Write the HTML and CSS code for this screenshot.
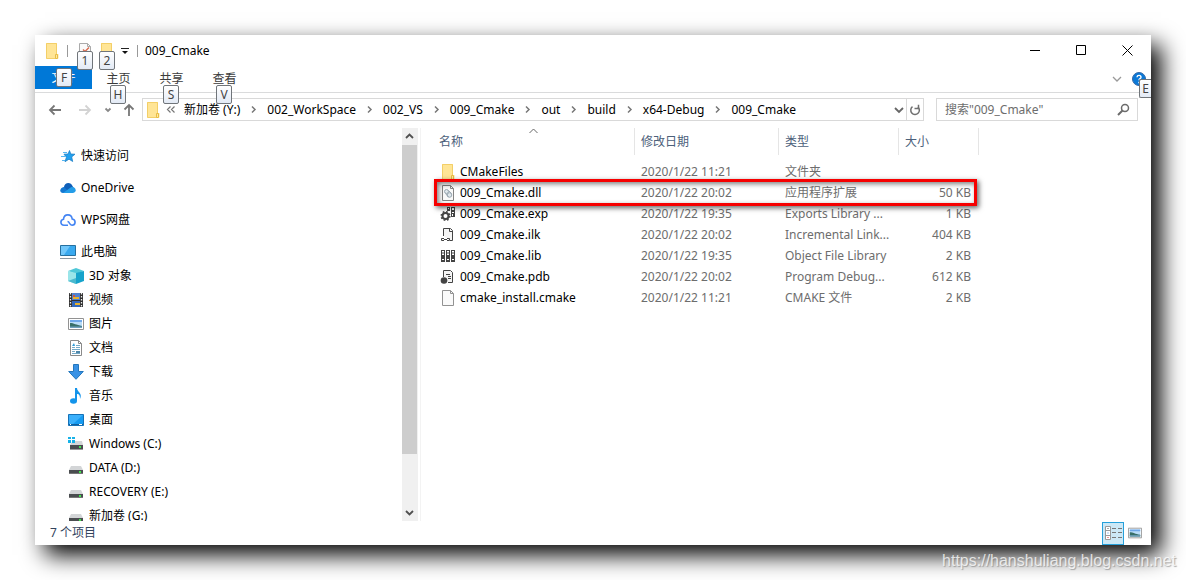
FILE: index.html
```html
<!DOCTYPE html>
<html lang="zh-CN">
<head>
<meta charset="utf-8">
<title>009_Cmake</title>
<link rel="stylesheet" href="styles.css">
</head>
<body>
<svg class="defs" aria-hidden="true">
  <symbol id="folder" viewBox="0 0 16 16"><path d="M2 0h11v11h1.500v4.500H2z" fill="#ffe596"/><path d="M2.500.5H12.500V11M2.500.5v15h10" fill="none" stroke="#f3cf68"/><path d="M11.500 11.500h2v4h-2z" fill="#ffe9a2" stroke="#e8bd45"/></symbol>
  <symbol id="drive" viewBox="0 0 16 16"><path d="M3 6h10l2 4H1z" fill="#d3d5d7"/><path d="M1 10h14v4H1z" fill="#4a4d50"/><path d="M1 13.500h14" stroke="#777"/><path d="M11 11h2v2h-2z" fill="#3fe64b"/></symbol>
  <symbol id="sep" viewBox="0 0 9 9"><path d="M3 1.500l3 3-3 3" fill="none" stroke="#777" stroke-width="1.500"/></symbol>
  <symbol id="picture" viewBox="0 0 16 16"><path d="M.5 2.500h15v11H.5z" fill="#fff" stroke="#929292"/><path d="M2 4h12v8H2z" fill="#b9dcf8"/><path d="M2 4h12v2H2z" fill="#6fa8ea"/><path d="M2 7c4 0 6 2 12 3v2H2z" fill="#386f68"/><path d="M2 10.500h12V12H2z" fill="#6fa0bd"/></symbol>
</svg>
<main class="window">
  <header class="titlebar">
    <svg class="icon" aria-hidden="true"><use href="#folder"/></svg>
    <span class="rule rule-first"></span>
    <button class="quick" aria-label="属性"><svg class="icon" viewBox="0 0 16 16"><path d="M2.500.5h8l3 3v12h-11z" fill="#fafafa" stroke="#aaa"/><path d="M10.500.5v3h3" fill="none" stroke="#aaa"/><path d="M6 6.500l2 2 4-4" fill="none" stroke="#d9694c" stroke-width="1.400"/></svg><kbd class="keytip">1</kbd></button>
    <button class="quick" aria-label="新建文件夹"><svg class="icon"><use href="#folder"/></svg><kbd class="keytip">2</kbd></button>
    <button class="quick-menu" aria-label="自定义快速访问工具栏"><svg width="8" height="8" viewBox="0 0 8 8"><path d="M0 1.500h8" stroke="#222"/><path d="M1 4h6L4 7z" fill="#111"/></svg></button>
    <span class="rule"></span>
    <h1 class="title">009_Cmake</h1>
    <div class="controls">
      <button aria-label="最小化"><svg width="11" height="11" viewBox="0 0 11 11"><path d="M0 5.500h10"/></svg></button>
      <button aria-label="最大化"><svg width="11" height="11" viewBox="0 0 11 11"><path d="M.5.5h9v9h-9z"/></svg></button>
      <button aria-label="关闭"><svg width="11" height="11" viewBox="0 0 11 11"><path d="M.5.5l10 10M10.500.5l-10 10"/></svg></button>
    </div>
  </header>
  <div class="ribbon">
    <button class="tab tab-file">文件<kbd class="keytip">F</kbd></button>
    <button class="tab">主页<kbd class="keytip">H</kbd></button>
    <button class="tab">共享<kbd class="keytip">S</kbd></button>
    <button class="tab">查看<kbd class="keytip">V</kbd></button>
    <div class="ribbon-end">
      <button aria-label="展开功能区"><svg width="10" height="10" viewBox="0 0 10 10"><path d="M1 3l4 4 4-4" fill="none" stroke="#999" stroke-width="1.300"/></svg></button>
      <button class="help" aria-label="帮助"><svg width="14" height="14" viewBox="0 0 14 14"><circle cx="7" cy="7" r="6.500" fill="#0b79d7" stroke="#3366a5"/><path d="M5 5.200c.2-2.500 4-2.300 4 0C9 6.700 7 6.500 7 8.300M7 9.800v1.500" fill="none" stroke="#fff" stroke-width="1.400"/></svg><kbd class="keytip keytip-cut">E</kbd></button>
    </div>
  </div>
  <div class="navbar">
    <div class="history">
      <button aria-label="后退"><svg width="14" height="12" viewBox="0 0 14 12"><path d="M13 6H2M6.500 1.500L2 6l4.500 4.500" stroke="#777"/></svg></button>
      <button aria-label="前进"><svg width="14" height="12" viewBox="0 0 14 12"><path d="M1 6h11M7.500 1.500L12 6l-4.500 4.500" stroke="#d3d3d3"/></svg></button>
      <button class="recent" aria-label="最近浏览的位置"><svg width="8" height="8" viewBox="0 0 8 8"><path d="M1.500 2.500L4 5l2.500-2.500" stroke="#888"/></svg></button>
      <button class="up" aria-label="上移"><svg width="12" height="14" viewBox="0 0 12 14"><path d="M6 13V2M1.500 6.500L6 2l4.500 4.500" stroke="#777"/></svg></button>
    </div>
    <div class="address">
      <svg class="icon" aria-hidden="true"><use href="#folder"/></svg>
      <svg class="more" width="10" height="9" viewBox="0 0 10 9"><path d="M4.500 1.500l-3 3 3 3M8.500 1.500l-3 3 3 3" fill="none" stroke="#777" stroke-width="1.200"/></svg>
      <nav class="crumbs" aria-label="路径">
        <a href="#">新加卷 (Y:)</a><svg><use href="#sep"/></svg>
        <a href="#">002_WorkSpace</a><svg><use href="#sep"/></svg>
        <a href="#">002_VS</a><svg><use href="#sep"/></svg>
        <a href="#">009_Cmake</a><svg><use href="#sep"/></svg>
        <a href="#">out</a><svg><use href="#sep"/></svg>
        <a href="#">build</a><svg><use href="#sep"/></svg>
        <a href="#">x64-Debug</a><svg><use href="#sep"/></svg>
        <a href="#">009_Cmake</a>
      </nav>
      <button class="drop" aria-label="以前的位置"><svg width="10" height="10" viewBox="0 0 10 10"><path d="M1 3l4 4 4-4" fill="none" stroke="#666" stroke-width="1.800"/></svg></button>
      <button class="refresh" aria-label="刷新"><svg width="12" height="12" viewBox="0 0 12 12"><path d="M9 3a4.300 4.300 0 1 1-5.500-.3" fill="none" stroke="#707070" stroke-width="1.500"/><path d="M5.500 4.500h4V.8" fill="none" stroke="#707070" stroke-width="1.500"/></svg></button>
    </div>
    <label class="search">
      <input type="text" placeholder='搜索"009_Cmake"' aria-label="搜索">
      <svg width="13" height="13" viewBox="0 0 13 13"><circle cx="8" cy="5" r="3.500" fill="none" stroke="#6b6b6b" stroke-width="1.500"/><path d="M5.500 7.500L1 12" stroke="#6b6b6b" stroke-width="2"/></svg>
    </label>
  </div>
  <div class="content">
    <nav class="tree" aria-label="导航窗格">
      <a class="root" href="#"><svg class="icon" viewBox="0 0 16 16"><path d="M9.500 2.500l1.300 3.500 4.200.2-3.300 2.700 1 4.600-3.700-2.300-4 2.500 1.400-4.500L4 6.200l4-.2z" fill="#22a0ee" stroke="#1678c2" stroke-width=".7"/><path d="M3 4.500h4M1 8.500h4M2 12.500h3" stroke="#54b6f2"/></svg>快速访问</a>
      <a class="root" href="#"><svg class="icon" viewBox="0 0 16 16"><path d="M4 7c.5-5 7-5.500 8.500-1L15 10H2z" fill="#0f5fb8"/><path d="M3 13C-1 13-.5 7.500 4 7l6 6z" fill="#1478d2"/><path d="M3 13l8-5.800C16 6 17.500 12.500 13 13z" fill="#249de8"/></svg>OneDrive</a>
      <a class="root" href="#"><svg class="icon" viewBox="0 0 16 16"><path d="M8 13.200H4C.2 13.200-.2 8 3.500 7.300 4 1.500 11.500 1.500 12.200 7c4 .8 3.700 6.200-.2 6.200-3 0-2-3.500-4.500-3.700" fill="none" stroke="#4384f3" stroke-width="1.600"/></svg>WPS网盘</a>
      <a class="root" href="#"><svg class="icon" viewBox="0 0 16 16"><path d="M.5 1.500h15v10H.5z" fill="#39a9ef" stroke="#26709f"/><path d="M1 2h9L4 11H1z" fill="#71c7fa"/><path d="M0 14.500h16" stroke="#8b98a2"/></svg>此电脑</a>
      <a class="leaf" href="#"><svg class="icon" viewBox="0 0 16 16"><path d="M0 3l8-3 8 3-8 3z" fill="#4fc8d8"/><path d="M0 3l8 2v11l-8-3z" fill="#9ae5e9"/><path d="M16 3L8 5v11l8-3z" fill="#16a3cb"/><path d="M0 13l8-3v6z" fill="#4ab9cf"/></svg>3D 对象</a>
      <a class="leaf" href="#"><svg class="icon" viewBox="0 0 16 16"><path d="M1 1h14v14H1z" fill="#303030"/><path d="M4 1h8v7H4z" fill="#5281d0"/><path d="M4 9h8v6H4z" fill="#3469ba"/><path d="M5 5h6v2H5zM7 11h5v2H7z" fill="#eab32c"/><path d="M5 3h2v2H5z" fill="#cd5b42"/><path d="M2.500 1v14M13.500 1v14" stroke="#eee" stroke-width="1.300" stroke-dasharray="1.500 1.500"/></svg>视频</a>
      <a class="leaf" href="#"><svg class="icon"><use href="#picture"/></svg>图片</a>
      <a class="leaf" href="#"><svg class="icon" viewBox="0 0 16 16"><path d="M2.500.5h8l3 3v12h-11z" fill="#fff" stroke="#8a8a8a"/><path d="M10.500.5v3h3" fill="none" stroke="#8a8a8a"/><path d="M4 7.500h3M4 9.500h8M4 11.500h3M4 13.500h8M8 5.500h4M8 7.500h4" stroke="#74a9c8"/><path d="M6 3l-2 3h3z" fill="#2f9bd8"/><path d="M8 11h4v2H8z" fill="#4f87aa"/></svg>文档</a>
      <a class="leaf" href="#"><svg class="icon" viewBox="0 0 16 16"><path d="M5.500.5h5v7h4.800L8 15.300.7 7.500h4.800z" fill="#3992e5" stroke="#2477bd"/></svg>下载</a>
      <a class="leaf" href="#"><svg class="icon" viewBox="0 0 16 16"><ellipse cx="5.500" cy="13" rx="3.500" ry="2.700" fill="#1394eb"/><path d="M7 0h2c0 4 6 5 3 11 0-4-1-5-3-5v7H7z" fill="#1394eb"/></svg>音乐</a>
      <a class="leaf" href="#"><svg class="icon" viewBox="0 0 16 16"><path d="M.5 2.500h15v11H.5z" fill="#169bf1" stroke="#1672b7"/><path d="M1 3h14L5 12H1z" fill="#3bb0fb"/><path d="M1 12.500h14" stroke="#105f9d"/><path d="M2 12.500h1m8 0h3" stroke="#fff"/></svg>桌面</a>
      <a class="leaf" href="#"><svg class="icon" viewBox="0 0 16 16"><path d="M5 5h9l1 4H2l1-2z" fill="#d3d5d7"/><path d="M2 9h13v5H2z" fill="#4a4d50"/><path d="M2 13.500h13" stroke="#999"/><path d="M11 10h2v2h-2z" fill="#3fe64b"/><path d="M0 1h3v2H0zM4 1h3v2H4zM0 4h3v3H0zM4 4h3v3H4z" fill="#16b2e8"/></svg>Windows (C:)</a>
      <a class="leaf" href="#"><svg class="icon"><use href="#drive"/></svg>DATA (D:)</a>
      <a class="leaf" href="#"><svg class="icon"><use href="#drive"/></svg>RECOVERY (E:)</a>
      <a class="leaf" href="#"><svg class="icon"><use href="#drive"/></svg>新加卷 (G:)</a>
    </nav>
    <div class="scrollbar">
      <button aria-label="向上滚动"><svg width="9" height="9" viewBox="0 0 9 9"><path d="M1 6l3.500-3.500L8 6"/></svg></button>
      <div class="track"><div class="thumb"></div></div>
      <button aria-label="向下滚动"><svg width="9" height="9" viewBox="0 0 9 9"><path d="M1 3l3.500 3.500L8 3"/></svg></button>
    </div>
    <section class="files">
      <table>
        <colgroup><col class="c-name"><col class="c-date"><col class="c-type"><col class="c-size"></colgroup>
        <thead><tr><th>名称<svg class="sort" width="9" height="6" viewBox="0 0 9 6"><path d="M.5 5l4-4 4 4" fill="none" stroke="#666"/></svg></th><th>修改日期</th><th>类型</th><th>大小</th></tr></thead>
        <tbody>
          <tr><td><div class="file"><svg class="icon"><use href="#folder"/></svg>CMakeFiles</div></td><td>2020/1/22 11:21</td><td>文件夹</td><td></td></tr>
          <tr><td><div class="file"><svg class="icon" viewBox="0 0 16 16"><path d="M2.500.5h8l3 3v12h-11z" fill="#fafafa" stroke="#858585"/><path d="M10.500.5v3h3" fill="none" stroke="#858585"/><circle cx="6.500" cy="6.500" r="2" fill="#dfe7ec" stroke="#9aa8b2"/><circle cx="9.500" cy="10" r="2.300" fill="#dfe7ec" stroke="#9aa8b2"/><path d="M5.500 8.500l3 3.500M8.500 5.500l3 3" stroke="#9aa8b2"/></svg>009_Cmake.dll</div></td><td>2020/1/22 20:02</td><td>应用程序扩展</td><td>50 KB</td></tr>
          <tr><td><div class="file"><svg class="icon" viewBox="0 0 16 16"><circle cx="5.500" cy="10" r="3" fill="none" stroke="#444" stroke-width="2"/><circle cx="5.500" cy="10" r="4.300" fill="none" stroke="#444" stroke-width="1.500" stroke-dasharray="1.700 1.677"/><path d="M7 1h3v4H7zM11 1h4v10h-4z" fill="#444"/><path d="M8 2h1v1H8zM12 2h2v2h-2zM12 6h2v1h-2zM12 8h1v2h-1z" fill="#fff"/></svg>009_Cmake.exp</div></td><td>2020/1/22 19:35</td><td>Exports Library ...</td><td>1 KB</td></tr>
          <tr><td><div class="file"><svg class="icon" viewBox="0 0 16 16"><path d="M3.500 9V1.500h7l2 2v10H10" fill="#f5f5f5" stroke="#444"/><path d="M9.500 1v3.500H13" fill="none" stroke="#444"/><path d="M4 11.500H1.500v2H4M7 11.500h2.500v2H7M4 12.500h3" fill="none" stroke="#444"/></svg>009_Cmake.ilk</div></td><td>2020/1/22 20:02</td><td>Incremental Link...</td><td>404 KB</td></tr>
          <tr><td><div class="file"><svg class="icon" viewBox="0 0 16 16"><path d="M1 2h4v12H1zM6 2h4v12H6zM11 2h4v12h-4z" fill="#444"/><path d="M2 3h2v4H2zM7 3h2v4H7zM12 3h2v4h-2zM2 11h2v1H2zM7 11h2v1H7zM12 11h2v1h-2z" fill="#fff"/><path d="M2 5h2M7 5h2M12 5h2" stroke="#444"/></svg>009_Cmake.lib</div></td><td>2020/1/22 19:35</td><td>Object File Library</td><td>2 KB</td></tr>
          <tr><td><div class="file"><svg class="icon" viewBox="0 0 16 16"><path d="M3.500 8V1.500h7l2 2v10H8" fill="#f5f5f5" stroke="#444"/><path d="M6 5.500h4M8 7.500h3M8 9.500h3" stroke="#444"/><circle cx="4" cy="11.500" r="3.300" fill="#444"/></svg>009_Cmake.pdb</div></td><td>2020/1/22 20:02</td><td>Program Debug...</td><td>612 KB</td></tr>
          <tr><td><div class="file"><svg class="icon" viewBox="0 0 16 16"><path d="M2.500.5h8l3 3v12h-11z" fill="#fafafa" stroke="#929292"/><path d="M10.500.5v3h3" fill="none" stroke="#929292"/></svg>cmake_install.cmake</div></td><td>2020/1/22 11:21</td><td>CMAKE 文件</td><td>2 KB</td></tr>
        </tbody>
      </table>
      <div class="highlight"></div>
    </section>
  </div>
  <footer class="status">
    <span>7 个项目</span>
    <div class="views">
      <button class="selected" aria-label="详细信息"><svg width="18" height="14" viewBox="0 0 18 14"><path d="M1.500.5h5v13h-5zM1.500 4.500h5M1.500 9.500h5" fill="#fff" stroke="#999"/><path d="M3.500 2.500h1" stroke="#555"/><path d="M3.500 7h1" stroke="#4285d8"/><path d="M3.500 11.500h1" stroke="#d22"/><path d="M8 2.500h4m2 0h4M8 6.500h4m2 0h4M8 11.500h4m2 0h4" stroke="#777"/></svg></button>
      <button aria-label="大图标"><svg width="14" height="14"><use href="#picture"/></svg></button>
    </div>
  </footer>
</main>
<div class="watermark">https://hanshuliang.blog.csdn.net</div>
</body>
</html>
```

FILE: styles.css
```css
* { box-sizing: border-box; }
body {
  margin: 0;
  min-height: 100vh;
  padding: 35px;
  display: flex;
  background: #fff;
  color: #000;
  font: 12px/18px "Noto Sans", "Noto Sans CJK SC", sans-serif;
  overflow: hidden;
}
button {
  margin: 0;
  padding: 0;
  border: 0;
  background: none;
  color: inherit;
  font: inherit;
  display: flex;
  align-items: center;
  justify-content: center;
}
a { color: inherit; text-decoration: none; }
svg { flex: none; display: block; }
.defs { display: none; }
.icon { width: 16px; height: 16px; }

.window {
  flex: 1;
  min-width: 0;
  display: flex;
  flex-direction: column;
  background: #fff;
  box-shadow: 10px 10px 22px #000;
}

.titlebar { display: flex; align-items: center; height: 31px; padding: 0 1px 0 9px; }
.rule { width: 1px; height: 12px; background: #999; }
.rule-first { margin: 0 9px 0 7px; }
.quick { position: relative; width: 16px; height: 16px; margin-right: 6px; }
.quick-menu { width: 8px; height: 12px; margin-right: 8px; }
.title { margin: 0 0 0 7px; font-size: 12px; font-weight: 400; }
.controls { display: flex; align-self: stretch; margin-left: auto; }
.controls button { width: 46px; }
.controls path { fill: none; stroke: #000; }

.keytip {
  position: absolute;
  z-index: 2;
  width: 16px;
  height: 19px;
  border: 1px solid #70757a;
  border-radius: 2px;
  background: linear-gradient(#fff, #e3eaf5);
  color: #444;
  font: 12px/17px "Noto Sans", sans-serif;
  text-align: center;
}
.quick .keytip { top: 8px; left: 0; }

.ribbon { display: flex; height: 27px; border-bottom: 1px solid #dadbdc; }
.tab { position: relative; width: 53px; height: 26px; color: #3b3b3b; }
.tab .keytip { top: 19px; left: 18px; }
.tab-file { width: 57px; height: 23px; background: #0078d7; color: #fff; }
.tab-file .keytip { top: 2px; left: 21px; }
.ribbon-end { display: flex; margin-left: auto; gap: 10px; padding-right: 5px; }
.help { position: relative; }
.keytip-cut { top: 13px; left: 7px; width: 12px; border-right: 0; border-radius: 2px 0 0 2px; }

.navbar { display: flex; align-items: center; padding: 5px 13px 7px 0; }
.history { display: flex; width: 107px; padding-left: 13px; }
.history button { width: 14px; height: 22px; margin-right: 16px; }
.history path { fill: none; stroke-width: 1.8; }
.history .recent { width: 8px; margin: 0 11px 0 -4px; }
.history .up { width: 12px; margin: 0; }
.address {
  flex: 1;
  min-width: 0;
  height: 23px;
  display: flex;
  align-items: center;
  border: 1px solid #d9d9d9;
  padding-left: 2px;
}
.more { margin: 0 8px 0 5px; }
.crumbs { flex: 1; display: flex; align-items: center; overflow: hidden; white-space: nowrap; }
.crumbs svg { width: 9px; height: 9px; margin: 0 9px; }
.drop { width: 15px; }
.refresh { width: 17px; align-self: stretch; border-left: 1px solid #d9d9d9; }
.search {
  display: flex;
  align-items: center;
  width: 202px;
  height: 23px;
  margin-left: 12px;
  padding: 0 7px 0 8px;
  border: 1px solid #d9d9d9;
}
.search input { flex: 1; min-width: 0; padding: 0; border: 0; outline: 0; background: none; font: inherit; }
.search input::placeholder { color: #6d6d6d; opacity: 1; }

.content { flex: 1 1 0; min-height: 0; display: flex; }
.tree { width: 367px; padding-top: 16px; overflow: hidden; }
.tree a { display: flex; align-items: center; gap: 5px; height: 24px; }
.tree .root { padding-left: 25px; }
.tree .root + .root { margin-top: 8px; }
.tree .leaf { padding-left: 33px; }
.scrollbar { width: 16px; display: flex; flex-direction: column; background: #f0f0f0; }
.scrollbar button { height: 17px; width: 15px; }
.scrollbar path { fill: none; stroke: #505050; stroke-width: 1.8; }
.track { flex: 1; }
.thumb { width: 15px; height: 86%; background: #cdcdcd; }

.files { position: relative; flex: 1; margin-left: 2px; border-left: 1px solid #f3f3f3; }
table { border-collapse: separate; border-spacing: 0; table-layout: fixed; width: 558px; }
.c-name { width: 214px; }
.c-date { width: 144px; }
.c-type { width: 120px; }
.c-size { width: 80px; }
th {
  position: relative;
  height: 27px;
  padding: 0 0 0 6px;
  border-right: 1px solid #e5e5e5;
  color: #4c607a;
  font-weight: 400;
  text-align: left;
}
th:first-child { padding-left: 18px; }
.sort { position: absolute; top: 0; left: 108px; }
tbody::before { content: ""; display: block; height: 6px; }
td { height: 21px; padding: 0 0 0 6px; color: #6d6d6d; white-space: nowrap; }
td:first-child { padding-left: 19px; color: #000; }
td:last-child { padding: 0 8px 0 0; text-align: right; }
.file { display: flex; align-items: center; gap: 4px; }
.highlight {
  position: absolute;
  top: 51px;
  left: 13px;
  width: 543px;
  height: 27px;
  border: 3px solid #f60000;
  box-shadow: 2px 2px 5px rgba(0, 0, 0, .6), inset 2px 2px 5px rgba(0, 0, 0, .5);
}

.status { display: flex; align-items: center; height: 24px; padding: 0 9px 0 15px; color: #32435d; }
.views { display: flex; align-self: stretch; align-items: center; gap: 4px; margin-left: auto; }
.views .selected { width: 22px; height: 23px; border: 1px solid #26a0da; background: #cce8f6; }

.watermark {
  position: absolute;
  right: 10px;
  bottom: 8px;
  color: rgba(255, 255, 255, .75);
  font: 16px/22px "Liberation Sans", Arial, sans-serif;
  text-shadow: 1px 1px 1px rgba(120, 120, 120, .6);
}
```
